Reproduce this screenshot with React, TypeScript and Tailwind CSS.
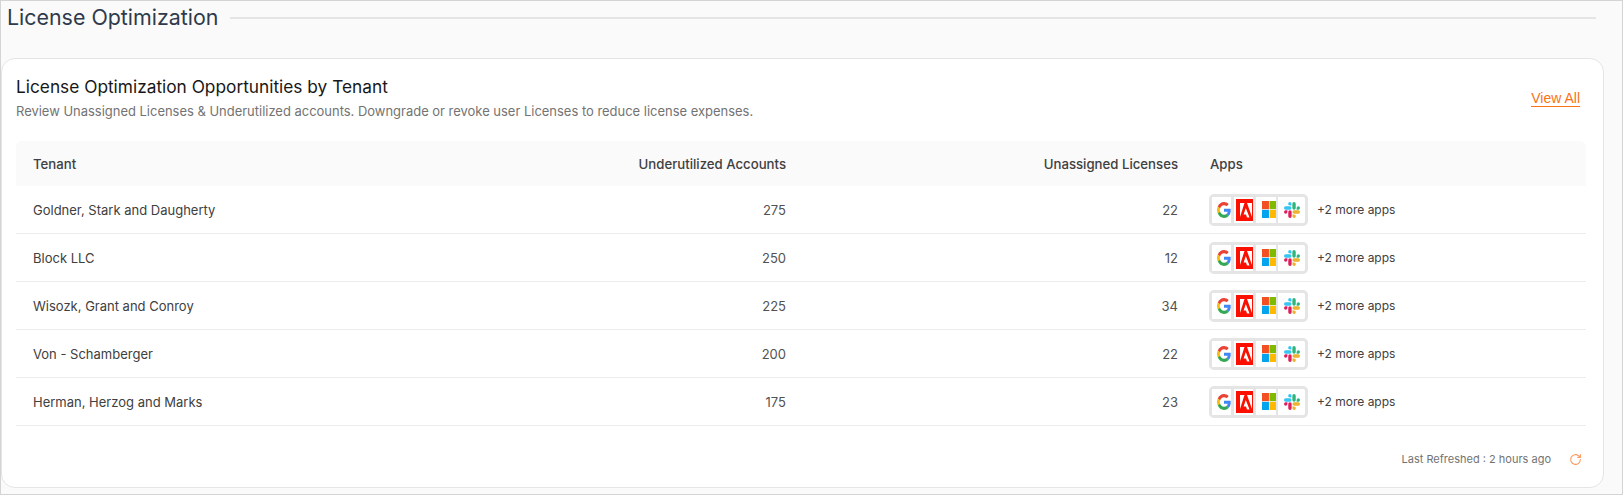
const rows = [
  ["Goldner, Stark and Daugherty", "275", "22"],
  ["Block LLC", "250", "12"],
  ["Wisozk, Grant and Conroy", "225", "34"],
  ["Von - Schamberger", "200", "22"],
  ["Herman, Herzog and Marks", "175", "23"],
];

function Google() {
  return (
    <svg viewBox="0 0 48 48" preserveAspectRatio="none" className="w-[14px] h-[16px]">
      <path fill="#EA4335" d="M24 9.500c3.500 0 6.700 1.200 9.200 3.600l6.900-6.900C35.900 2.400 30.500 0 24 0 14.600 0 6.500 5.400 2.600 13.200l8 6.200C12.500 13.700 17.800 9.500 24 9.500z" />
      <path fill="#4285F4" d="M47 24.500c0-1.600-.1-3.100-.4-4.500H24v9h12.900c-.6 3-2.200 5.500-4.700 7.200l7.700 6C44.400 38 47 31.800 47 24.500z" />
      <path fill="#FBBC05" d="M10.500 28.600c-.5-1.400-.8-3-.8-4.600s.3-3.200.8-4.600l-8-6.200C.9 16.500 0 20.100 0 24s.9 7.500 2.600 10.800l7.900-6.200z" />
      <path fill="#34A853" d="M24 48c6.500 0 11.900-2.100 15.900-5.800l-7.700-6c-2.200 1.400-4.900 2.300-8.200 2.300-6.200 0-11.500-4.200-13.400-9.900l-8 6.200C6.500 42.600 14.600 48 24 48z" />
    </svg>
  );
}

function Adobe() {
  return (
    <svg viewBox="0 0 17 22" className="w-[17px] h-[22px]">
      <rect width="17" height="22" fill="#FA0F00" />
      <path fill="#fff" d="M8.500 4H4v14zM11 4h5v14zM9.800 9l3.700 9.500H11l-1-3H7.600z" />
    </svg>
  );
}

function Microsoft() {
  return (
    <svg viewBox="0 0 15 15" preserveAspectRatio="none" className="w-[14.500px] h-[17px]">
      <rect x="0" y="0" width="7.200" height="7.200" fill="#F25022" />
      <rect x="7.800" y="0" width="7.200" height="7.200" fill="#7FBA00" />
      <rect x="0" y="7.800" width="7.200" height="7.200" fill="#00A4EF" />
      <rect x="7.800" y="7.800" width="7.200" height="7.200" fill="#FFB900" />
    </svg>
  );
}

function Slack() {
  return (
    <svg viewBox="0 0 54 54" className="w-[16px] h-[16px]">
      <path fill="#36C5F0" d="M19.700 0a5.700 5.700 0 0 0 0 11.400h5.700V5.700A5.700 5.700 0 0 0 19.700 0zm0 14.400H5.700a5.700 5.700 0 0 0 0 11.400h14a5.700 5.700 0 0 0 0-11.400z" />
      <path fill="#2EB67D" d="M54 20.100a5.700 5.700 0 0 0-11.400 0v5.700h5.700a5.700 5.700 0 0 0 5.700-5.700zm-14.400 0v-14.400a5.700 5.700 0 0 0-11.400 0v14.400a5.700 5.700 0 0 0 11.400 0z" />
      <path fill="#ECB22E" d="M34.300 54a5.700 5.700 0 0 0 0-11.400h-5.700v5.700a5.700 5.700 0 0 0 5.700 5.700zm0-14.400h14a5.700 5.700 0 0 0 0-11.400h-14a5.700 5.700 0 0 0 0 11.400z" />
      <path fill="#E01E5A" d="M0 33.900a5.700 5.700 0 0 0 11.400 0v-5.700H5.700A5.700 5.700 0 0 0 0 33.900zm14.400 0v14.400a5.700 5.700 0 0 0 11.400 0V33.900a5.700 5.700 0 0 0-11.400 0z" />
    </svg>
  );
}

function AppIcons() {
  return (
    <div className="flex items-center h-[32px] w-[99px] border-[3px] border-[#e5e5e5] rounded-[5px] bg-[#e5e5e5]">
      <div className="flex h-[26px] w-[19px] items-center justify-end bg-white"><Google /></div>
      <div className="ml-[3px] flex h-[26px] w-[19px] items-center justify-end bg-white"><Adobe /></div>
      <div className="ml-[3px] flex h-[26px] w-[20px] items-center justify-end bg-white"><Microsoft /></div>
      <div className="ml-[2px] flex h-[26px] w-[27px] items-center justify-center bg-white rounded-r-[2px]"><Slack /></div>
    </div>
  );
}

export default function App() {
  return (
    <div className="h-[495px] w-[1623px] border border-[#d4d4d4] bg-[#fafafa] font-['Inter',sans-serif] overflow-hidden">
      <div className="flex h-[33px] items-center pl-[6px] pr-[26px] gap-[12px]">
        <h1 className="text-[21.4px] leading-[33px] font-normal text-[#2f3a4c] whitespace-nowrap">License Optimization</h1>
        <div className="h-[2px] flex-1 bg-[#e5e5e5]" />
      </div>
      <div className="mt-[24px] h-[430px] w-[1603px] rounded-[14px] border border-[#e5e5e5] bg-white pl-[14px] pr-[17px]">
        <div className="flex h-[82px] items-center justify-between">
          <div className="mt-[-3px]">
            <h2 className="text-[17.3px] leading-[24px] font-normal text-[#171717]">License Optimization Opportunities by Tenant</h2>
            <p className="text-[12.96px] leading-[24px] text-[#737373]">Review Unassigned Licenses &amp; Underutilized accounts. Downgrade or revoke user Licenses to reduce license expenses.</p>
          </div>
          <a className="mr-[6px] mt-[-3px] font-['Liberation_Sans',sans-serif] text-[14px] leading-[15px] text-[#f97316] border-b border-[#f97316]">View All</a>
        </div>
        <div className="grid h-[45px] grid-cols-[384px_386px_392px_1fr] items-center rounded-t-[6px] bg-[#fafafa] text-[13.2px] font-medium text-[#404040]">
          <div className="pl-[17px] pt-[2px]">Tenant</div>
          <div className="text-right pt-[2px]">Underutilized Accounts</div>
          <div className="text-right pt-[2px]">Unassigned Licenses</div>
          <div className="pl-[32px] pt-[2px]">Apps</div>
        </div>
        {rows.map((r) => (
          <div key={r[0]} className="grid h-[48px] grid-cols-[384px_386px_392px_1fr] items-center border-b border-[#ececec] text-[13px] text-[#404040]">
            <div className="pl-[17px] pt-[2px]">{r[0]}</div>
            <div className="text-right text-[#525252] pt-[2px]">{r[1]}</div>
            <div className="text-right text-[#525252] pt-[2px]">{r[2]}</div>
            <div className="flex items-center gap-[9px] pl-[31px]">
              <AppIcons />
              <span className="text-[12px] text-[#404040]">+2 more apps</span>
            </div>
          </div>
        ))}
        <div className="flex h-[62px] items-center justify-end pr-[4px] pt-[4px]">
          <span className="text-[11px] text-[#737373]">Last Refreshed : 2 hours ago</span>
          <svg viewBox="0 0 24 24" className="ml-[18px] w-[13px] h-[13px]" fill="none" stroke="#fb9a5c" strokeWidth="2" strokeLinecap="round" strokeLinejoin="round">
            <path d="M21 12a9 9 0 1 1-3-6.700L21 8" />
            <path d="M21 3v5h-5" />
          </svg>
        </div>
      </div>
    </div>
  );
}
